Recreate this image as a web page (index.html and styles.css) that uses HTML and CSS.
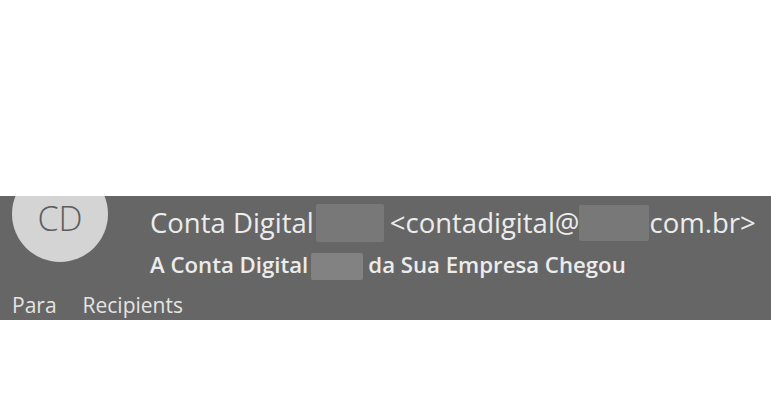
FILE: index.html
```html
<!DOCTYPE html>
<html>
<head>
<meta charset="utf-8">
<link rel="stylesheet" href="styles.css">
</head>
<body>
<div class="header">
  <div class="top">
    <div class="avatar"><span>CD</span></div>
    <div class="info">
      <div class="from">Conta Digital<span class="blur b1"></span><span class="addr">&lt;contadigital@</span><span class="blur b2"></span>com.br&gt;</div>
      <div class="subject">A Conta Digital<span class="blur b3"></span>da Sua Empresa Chegou</div>
    </div>
  </div>
  <div class="to"><span class="label">Para</span><span>Recipients</span></div>
</div>
</body>
</html>
```
FILE: styles.css
```css
html, body {
  margin: 0;
  padding: 0;
  background: #ffffff;
}
body {
  font-family: "Open Sans", "Noto Sans", sans-serif;
  width: 771px;
  height: 420px;
  overflow: hidden;
}
.header {
  margin-top: 196px;
  height: 124px;
  background: #666666;
  overflow: hidden;
  color: #ececec;
}
.top {
  display: flex;
  align-items: flex-start;
  height: 96px;
}
.avatar {
  flex: none;
  width: 96px;
  height: 96px;
  margin: -30px 0 0 12px;
  border-radius: 50%;
  background: #d4d4d4;
  color: #5e5e5e;
  display: flex;
  justify-content: center;
  font-size: 34px;
  font-weight: 300;
  line-height: normal;
  padding-top: 29px;
  box-sizing: border-box;
}
.info {
  margin-left: 42px;
  padding-top: 6.5px;
}
.from {
  font-size: 27.5px;
  font-weight: 400;
  line-height: 40px;
  white-space: nowrap;
  display: flex;
  align-items: center;
}
.blur {
  display: inline-block;
  background: #787878;
  border-radius: 2px;
}
.b1 {
  width: 68px;
  height: 38px;
  margin: 0 6px 0 2px;
}
.b2 {
  width: 70px;
  height: 36px;
}
.subject {
  font-size: 22.2px;
  font-weight: 600;
  line-height: 30px;
  margin-top: 6.5px;
  white-space: nowrap;
  display: flex;
  align-items: center;
}
.b3 {
  width: 52px;
  height: 27px;
  margin: 4px 5px 0 3px;
  background: #828282;
}
.to {
  font-size: 21px;
  line-height: 26px;
  padding-left: 12px;
  color: #e4e4e4;
}
.to .label {
  margin-right: 26px;
}
```
